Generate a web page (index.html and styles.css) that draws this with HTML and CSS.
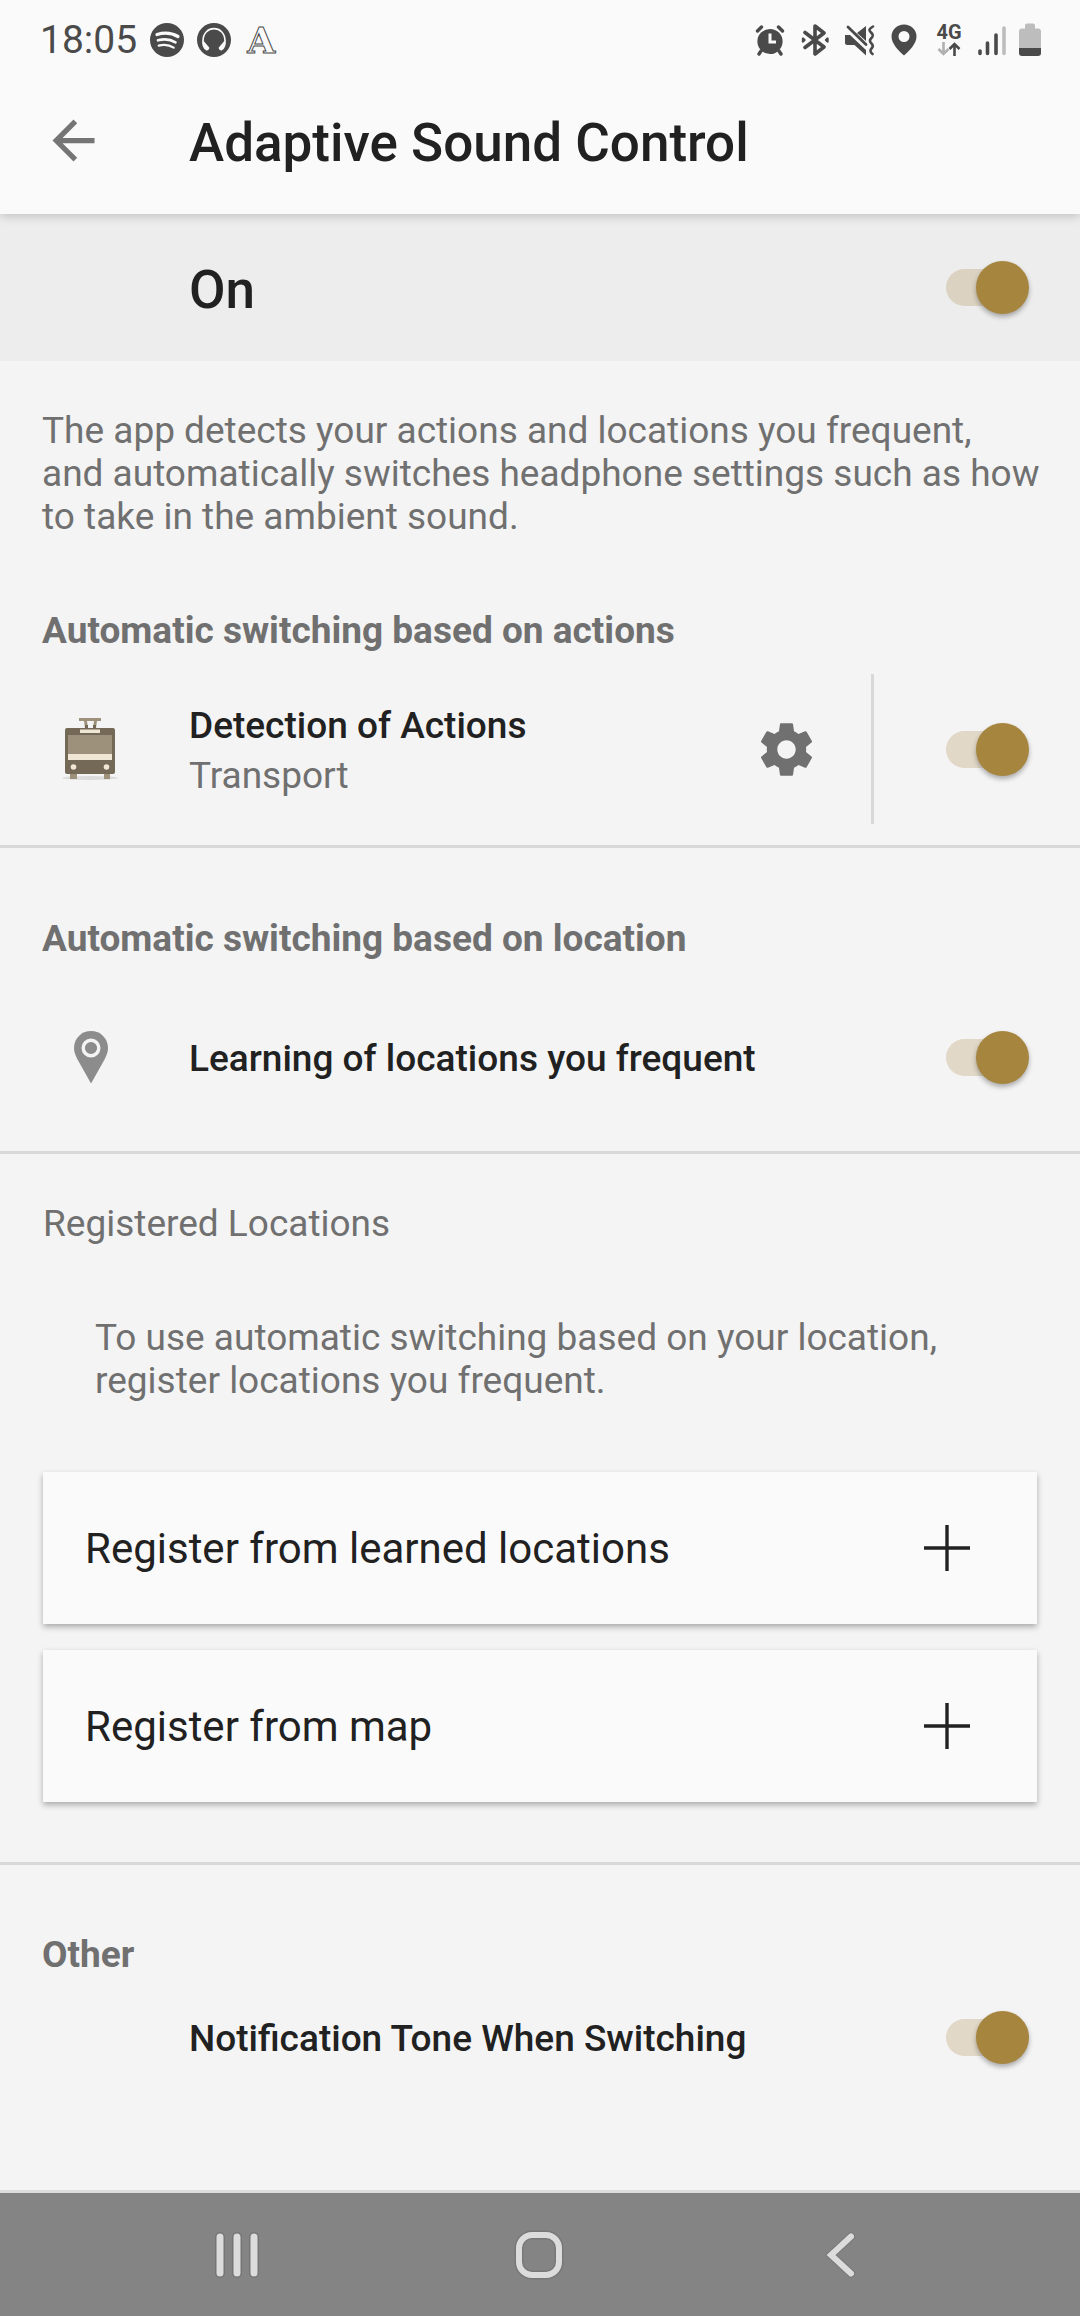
FILE: index.html
```
<!DOCTYPE html>
<html lang="en">
<head>
    <meta charset="UTF-8">
    <meta name="viewport" content="width=device-width, initial-scale=1.0">
    <title>Adaptive Sound Control</title>
    <link rel="stylesheet" href="styles.css">
</head>
<body>
    <header class="header">
        <div class="status-bar">
            <div class="status-left">
                <span class="time">18:05</span>
                <svg width="34" height="34" viewBox="0 0 34 34">
                    <circle cx="17" cy="17" r="17" fill="#4a4a4a"/>
                    <g fill="none" stroke="#fafafa" stroke-linecap="round">
                        <path d="M7 11.500c7-2 15-1.500 21 2" stroke-width="3.200"/>
                        <path d="M8 17.300c6-1.600 12.500-1 17.500 2" stroke-width="2.600"/>
                        <path d="M8.700 22.600c5-1.200 10.500-.800 15 2" stroke-width="2.200"/>
                    </g>
                </svg>
                <svg width="34" height="34" viewBox="0 0 34 34">
                    <circle cx="17" cy="17" r="17" fill="#4a4a4a"/>
                    <path d="M6 18C6 1.500 28 1.500 28 18" fill="none" stroke="#fafafa" stroke-width="1.600"/>
                    <path d="M5.200 17.500l1.500.500 5.500 6.500c.500 1.500-1.200 3.300-3 3C6 25.500 4.700 21.500 5.200 17.500zM28.800 17.500l-1.500.500-5.500 6.500c-.500 1.500 1.200 3.300 3 3 3.200-2 4.500-6 4-10z" fill="#fafafa"/>
                </svg>
                <span class="app-letter">A</span>
            </div>
            <div class="status-right">
                <svg width="32" height="32" viewBox="0 0 32 32">
                    <circle cx="17" cy="17.500" r="12.600" fill="#4a4a4a"/>
                    <path d="M4.500 7l4-4M29.500 7l-4-4M8 27l-2 3M26 27l2 3" stroke="#4a4a4a" stroke-width="3.400" stroke-linecap="round"/>
                    <path d="M17 9.500v8.500h6" fill="none" stroke="#fafafa" stroke-width="3"/>
                </svg>
                <svg width="32" height="32" viewBox="0 0 32 32" fill="none" stroke="#4a4a4a" stroke-width="3.600" stroke-linejoin="round" stroke-linecap="round">
                    <path d="M7 8.500l19 14.500-9 7V2l9 7-19 14.500"/>
                    <path d="M5 14.500v3l1.500-1.500zM29.500 14.500v3l-1.500-1.500z" stroke-width="2.400"/>
                </svg>
                <svg width="32" height="32" viewBox="0 0 32 32">
                    <path d="M2 11h5L23 26v5.500L11.500 21H4.500C3 21 2 20 2 19zM14 9l9-7v15z" fill="#4a4a4a"/>
                    <path d="M5 3l18 17.500" stroke="#4a4a4a" stroke-width="2.800" stroke-linecap="round"/>
                    <path d="M30 2.500c-5 3-4 4-1.500 6.500s1 4-.500 5.500-1.500 3 .500 5 1.500 3.500 0 5-1.500 3.500 1 5.500" fill="none" stroke="#4a4a4a" stroke-width="2.600" stroke-linecap="round"/>
                </svg>
                <svg width="32" height="32" viewBox="0 0 32 32">
                    <path d="M16 .500C9 .500 3.500 5.500 3.500 12.500 3.500 20 11 27 16 31.500c5-4.500 12.500-11.500 12.500-19C28.500 5.500 23 .500 16 .500zm0 6.500a5.500 5.500 0 1 1 0 11 5.500 5.500 0 0 1 0-11z" fill="#4a4a4a" fill-rule="evenodd"/>
                </svg>
                <span class="network">
                    <span>4G</span>
                    <svg width="24" height="14" viewBox="0 0 24 14" fill="none" stroke-width="2.600">
                        <path d="M6.500 0v11.500M1.500 7l5 5 5-5" stroke="#b0b0b0"/>
                        <path d="M17.500 14V2.500M12.500 7l5-5 5 5" stroke="#4a4a4a"/>
                    </svg>
                </span>
                <svg width="28" height="32" viewBox="0 0 28 32" stroke="#4a4a4a" stroke-width="3.600" stroke-linecap="round">
                    <path d="M2 27v2.500M9.500 19v10.500M18 11v18.500"/>
                    <path d="M26 4v25.500" stroke="#bdbdbd"/>
                </svg>
                <svg width="22" height="34" viewBox="0 0 22 34">
                    <path d="M0 25V8.500C0 6.500 1 5.500 3 5.500h3V3c0-1.500.500-2.500 2-2.500h6c1.500 0 2 1 2 2.500v2.500h3c2 0 3 1 3 3V25z" fill="#bdbdbd"/>
                    <path d="M0 25h22v5c0 2-1 3-3 3H3c-2 0-3-1-3-3z" fill="#4a4a4a"/>
                </svg>
            </div>
        </div>
        <div class="app-bar">
            <button class="icon-button" aria-label="Back">
                <svg width="63" height="63" viewBox="0 0 24 24" fill="#757575">
                    <path d="M20 11H7.830l5.590-5.590L12 4l-8 8 8 8 1.410-1.410L7.830 13H20v-2z"/>
                </svg>
            </button>
            <h1>Adaptive Sound Control</h1>
        </div>
    </header>

    <main>
        <div class="master">
            <label for="master">On</label>
            <input type="checkbox" class="toggle" id="master" checked>
        </div>

        <section class="actions">
            <p class="intro">The app detects your actions and locations you frequent,<br>and automatically switches headphone settings such as how to take in the ambient sound.</p>
            <h2>Automatic switching based on actions</h2>
            <div class="row">
                <svg class="row-icon" width="96" height="64" viewBox="42 720 96 64">
                    <ellipse cx="90" cy="781" rx="28" ry="2" fill="#dcdcdc"/>
                    <path d="M70 776h7v6h-7zM104 776h6v6h-6zM79 721h22v3H79zM84 724h3l1 7h-3zM94 724h3l-1 7h-3z" fill="#9d917b"/>
                    <path d="M85 728h3v3h-3zM93 728h3v3h-3z" fill="#746857"/>
                    <rect x="65" y="731" width="50" height="46" rx="2" fill="#746857"/>
                    <path d="M80 732.500h20v3.500H80z" fill="#efe6d3"/>
                    <path d="M68 738h44v19H68z" fill="#9d917b"/>
                    <path d="M68 757h44v6H68z" fill="#efe6d3"/>
                    <circle cx="73.500" cy="770" r="2.800" fill="#efe6d3"/>
                    <circle cx="106.500" cy="770" r="2.800" fill="#efe6d3"/>
                </svg>
                <label class="row-text" for="detection">
                    Detection of Actions
                    <span class="row-sub">Transport</span>
                </label>
                <button class="icon-button" aria-label="Detection settings">
                    <svg width="63" height="63" viewBox="0 0 24 24" fill="#707070">
                        <path d="M19.430 12.980c.040-.320.070-.640.070-.980s-.030-.660-.070-.980l2.110-1.650c.190-.150.240-.420.120-.640l-2-3.460c-.120-.220-.390-.300-.610-.220l-2.490 1c-.520-.400-1.080-.730-1.690-.980l-.380-2.650C14.460 2.180 14.250 2 14 2h-4c-.250 0-.460.180-.490.420l-.380 2.650c-.610.250-1.170.590-1.690.980l-2.490-1c-.230-.090-.490 0-.610.220l-2 3.460c-.130.220-.070.490.120.640l2.110 1.650c-.040.320-.070.650-.070.980s.030.660.070.980l-2.110 1.650c-.190.150-.240.420-.120.640l2 3.460c.120.220.390.300.610.220l2.490-1c.520.400 1.080.730 1.690.980l.380 2.650c.030.240.240.420.490.420h4c.250 0 .460-.180.490-.420l.380-2.650c.610-.250 1.170-.590 1.690-.980l2.490 1c.230.090.490 0 .610-.220l2-3.460c.120-.220.070-.490-.120-.640l-2.110-1.650zM12 15.500c-1.930 0-3.500-1.570-3.500-3.500s1.570-3.500 3.500-3.500 3.500 1.570 3.500 3.500-1.570 3.500-3.500 3.500z"/>
                    </svg>
                </button>
                <span class="separator"></span>
                <input type="checkbox" class="toggle" id="detection" checked>
            </div>
        </section>

        <section class="location">
            <h2>Automatic switching based on location</h2>
            <div class="row">
                <svg class="row-icon" width="96" height="54" viewBox="0 0 96 54">
                    <path d="M49 1C39.500 1 32 8.500 32 18c0 4 1.500 7.500 3.500 11.500L49 53.500l13.500-24C64.500 25.500 66 22 66 18 66 8.500 58.500 1 49 1z" fill="#8c8c8c"/>
                    <circle cx="49" cy="18" r="7.800" fill="#8c8c8c" stroke="#f4f4f4" stroke-width="3.400"/>
                </svg>
                <label class="row-text" for="learning">Learning of locations you frequent</label>
                <input type="checkbox" class="toggle" id="learning" checked>
            </div>
        </section>

        <section class="registered">
            <h3>Registered Locations</h3>
            <p class="hint">To use automatic switching based on your location, register locations you frequent.</p>
            <div class="cards">
                <button class="card">
                    Register from learned locations
                    <svg width="46" height="46" viewBox="0 0 46 46" stroke="#212121" stroke-width="3.400">
                        <path d="M23 0v46M0 23h46"/>
                    </svg>
                </button>
                <button class="card">
                    Register from map
                    <svg width="46" height="46" viewBox="0 0 46 46" stroke="#212121" stroke-width="3.400">
                        <path d="M23 0v46M0 23h46"/>
                    </svg>
                </button>
            </div>
        </section>

        <section class="other">
            <h2>Other</h2>
            <div class="row">
                <span class="row-icon"></span>
                <label class="row-text" for="tone">Notification Tone When Switching</label>
                <input type="checkbox" class="toggle" id="tone" checked>
            </div>
        </section>
    </main>

    <nav class="nav-bar">
        <div class="nav-buttons">
            <button class="icon-button" aria-label="Recent apps">
                <svg width="48" height="52" viewBox="0 0 48 52" stroke-linecap="round">
                    <path d="M6 8v36M23 8v36M40 8v36" stroke="#757575" stroke-width="10"/>
                    <path d="M6 8v36M23 8v36M40 8v36" stroke="#dcdcdc" stroke-width="7"/>
                </svg>
            </button>
            <button class="icon-button" aria-label="Home">
                <svg width="52" height="52" viewBox="0 0 52 52" fill="none">
                    <rect x="5" y="6" width="40" height="40" rx="13" stroke="#787878" stroke-width="9"/>
                    <rect x="5" y="6" width="40" height="40" rx="13" stroke="#dcdcdc" stroke-width="6"/>
                </svg>
            </button>
            <button class="icon-button" aria-label="Back">
                <svg width="36" height="52" viewBox="0 0 36 52" fill="none" stroke-linecap="round">
                    <path d="M27 7.500L7 26l20 18.500" stroke="#787878" stroke-width="8"/>
                    <path d="M27 7.500L7 26l20 18.500" stroke="#dcdcdc" stroke-width="6"/>
                </svg>
            </button>
        </div>
    </nav>
</body>
</html>
```
FILE: styles.css
```
:root {
    --accent: #a6853e;
    --background: #f4f4f4;
    --surface: #fafafa;
    --text: #212121;
    --muted: #707070;
    --line: #d8d8d8;
    --status: #4a4a4a;
}

* {
    margin: 0;
    padding: 0;
    box-sizing: border-box;
}

body {
    font-family: Roboto, "Liberation Sans", sans-serif;
    font-size: 37px;
    line-height: 43px;
    color: var(--muted);
    background: var(--background);
    min-height: 100vh;
    display: flex;
    flex-direction: column;
}

svg {
    display: block;
    flex-shrink: 0;
}

button {
    font: inherit;
    border: none;
    background: none;
    cursor: pointer;
}

/* Header */
.header {
    position: relative;
    background: var(--surface);
    box-shadow: 0 2px 10px rgba(0, 0, 0, 0.2);
}

.status-bar {
    display: flex;
    justify-content: space-between;
    align-items: center;
    height: 67px;
    padding: 13px 39px 0 40px;
}

.status-left,
.status-right {
    display: flex;
    align-items: center;
    gap: 13px;
    color: var(--status);
}

.time {
    font-size: 39px;
}

.app-letter {
    margin-left: 3px;
    font-family: "DejaVu Serif", serif;
    font-weight: bold;
    font-size: 36px;
    color: transparent;
    -webkit-text-stroke: 1px var(--status);
}

.network {
    display: flex;
    flex-direction: column;
    align-items: center;
    gap: 2px;
    width: 32px;
    font-size: 20px;
    line-height: 16px;
    font-weight: 700;
}

.app-bar {
    display: flex;
    align-items: center;
    gap: 84px;
    height: 147px;
    padding: 0 42px;
}

h1,
.master label {
    padding-top: 4px;
    font-size: 53px;
    line-height: 62px;
    font-weight: 500;
    color: var(--text);
}

/* On / off banner */
.master {
    display: flex;
    justify-content: space-between;
    align-items: center;
    height: 147px;
    padding: 0 51px 0 189px;
    background: #ededed;
}

/* Switches */
.toggle {
    appearance: none;
    position: relative;
    flex-shrink: 0;
    width: 83px;
    height: 53px;
    cursor: pointer;
}

.toggle::before {
    content: "";
    position: absolute;
    top: 8px;
    left: 0;
    width: 74px;
    height: 37px;
    border-radius: 19px;
    background: var(--accent);
    opacity: 0.25;
}

.toggle::after {
    content: "";
    position: absolute;
    top: 0;
    left: 0;
    width: 53px;
    height: 53px;
    border-radius: 50%;
    background: #fafafa;
    box-shadow: 0 3px 5px rgba(0, 0, 0, 0.3);
}

.toggle:checked::after {
    left: 30px;
    background: var(--accent);
}

/* Sections */
main {
    flex: 1;
}

section + section {
    border-top: 3px solid var(--line);
}

.actions {
    padding: 48px 0 21px;
}

.location {
    padding: 69px 0 19px;
}

.registered {
    padding: 48px 43px 60px;
}

.other {
    padding-top: 68px;
}

.intro {
    padding: 0 30px 0 42px;
    margin-bottom: 71px;
}

h2 {
    font-size: 37px;
    font-weight: 700;
    padding: 0 42px;
    margin-bottom: 22px;
}

h3 {
    font-size: 37px;
    font-weight: 400;
}

.row {
    display: flex;
    align-items: center;
    min-height: 150px;
    padding: 0 51px 0 42px;
}

.other .row {
    min-height: 78px;
}

.row-icon {
    width: 96px;
    margin-right: 51px;
}

.row-text {
    flex: 1;
    padding-top: 2px;
    font-weight: 500;
    color: var(--text);
}

.row-sub {
    display: block;
    margin-top: 7px;
    font-weight: 400;
    color: var(--muted);
}

.separator {
    width: 3px;
    height: 150px;
    margin: 0 72px 0 53px;
    background: var(--line);
}

.hint {
    padding: 0 52px;
    margin: 71px 0 70px;
}

/* Register buttons */
.cards {
    display: grid;
    gap: 26px;
}

.card {
    display: flex;
    justify-content: space-between;
    align-items: center;
    height: 152px;
    padding: 0 67px 0 42px;
    font-size: 42px;
    text-align: left;
    color: var(--text);
    background: var(--surface);
    box-shadow: 0 3px 6px rgba(0, 0, 0, 0.3);
}

/* Navigation bar */
.nav-bar {
    background: #848484;
    border-top: 3px solid #dcdcdc;
}

.nav-buttons {
    display: grid;
    grid-template-columns: repeat(3, 1fr);
    justify-items: center;
    align-items: center;
    width: 84%;
    height: 123px;
    margin: 0 auto;
}
```
